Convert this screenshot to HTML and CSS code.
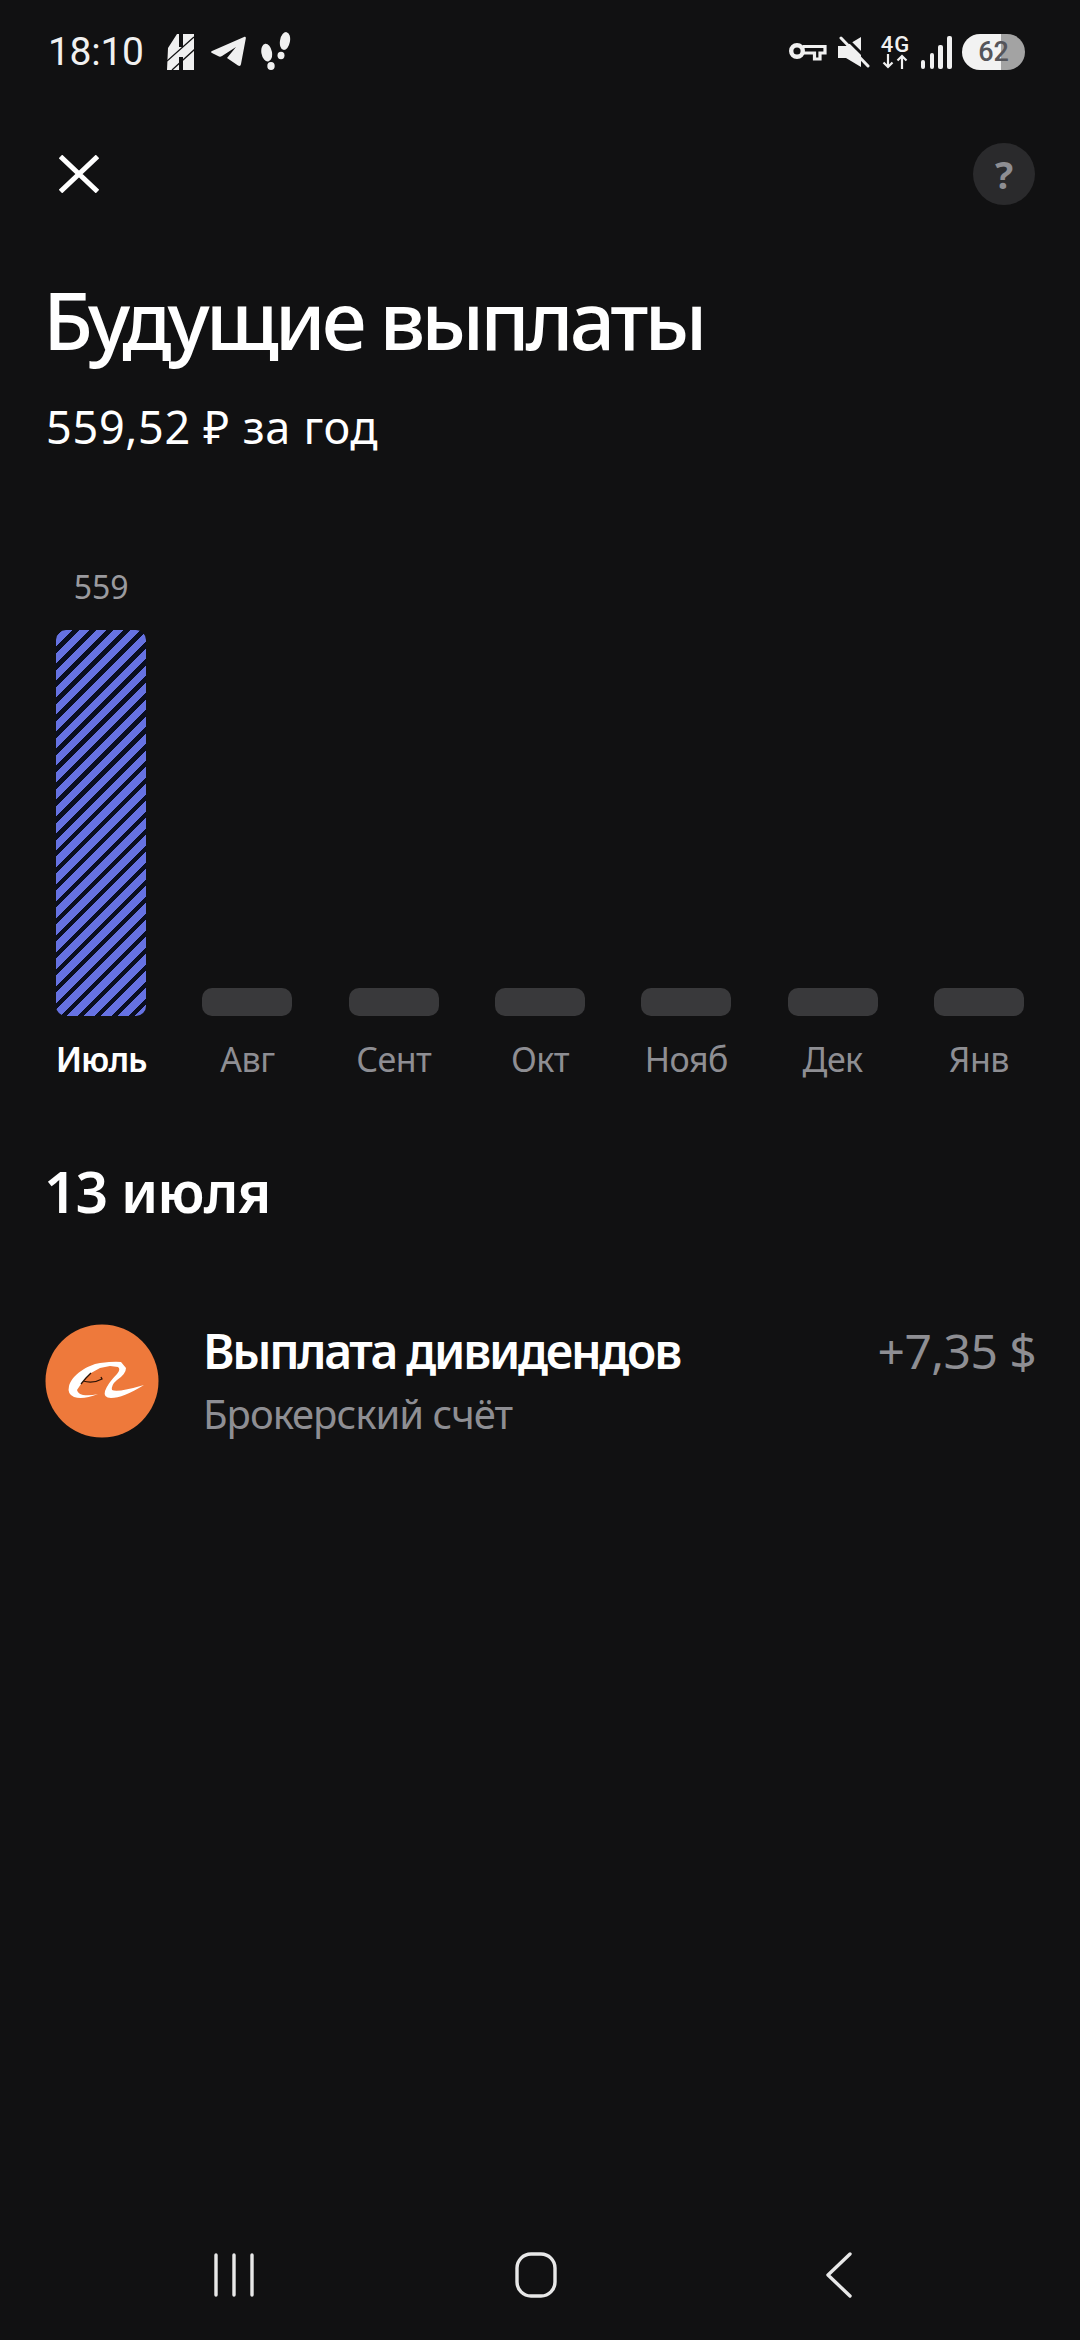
FILE: index.html
```html
<!DOCTYPE html>
<html lang="ru">
<head>
    <meta charset="UTF-8">
    <title>Будущие выплаты</title>
    <link rel="stylesheet" href="styles.css">
</head>
<body>
    <div class="status-bar">
        <div class="status-left">
            <span class="time">18:10</span>
            <svg class="ic-h" width="28" height="36" viewBox="0 0 28 36">
                <path fill="#f0f0f0" d="M1 14L10 0h2v13h4V0h11v36H16V23h-4v13H0z"/>
                <path stroke="#111112" stroke-width="1.300" d="M0 27L27 3M5 36L28 15"/>
            </svg>
            <svg class="ic-tg" width="35" height="32" viewBox="0 0 35 32">
                <path fill="#f0f0f0" d="M1 15L33 1c1.500-.5 2 0 1.800 1.500L30 28c-.3 2-1.500 2.500-3 1.500L16 22l9-11-14 9c-1.500 1-2.500 1-4 0L1 17c-1.500-.7-1-1.500 0-2z"/>
            </svg>
            <svg class="ic-steps" width="30" height="40" viewBox="0 0 30 40">
                <ellipse fill="#f0f0f0" cx="5.700" cy="20.700" rx="5.300" ry="9" transform="rotate(-10 5.700 20.700)"/>
                <ellipse fill="#f0f0f0" cx="10" cy="34" rx="3.700" ry="3.900"/>
                <ellipse fill="#f0f0f0" cx="24" cy="9" rx="5" ry="9" transform="rotate(10 24 9)"/>
                <ellipse fill="#f0f0f0" cx="20" cy="23.500" rx="3.500" ry="3.700"/>
            </svg>
        </div>
        <div class="status-right">
            <svg width="38" height="22" viewBox="0 0 38 22">
                <circle cx="8" cy="10" r="5.800" fill="none" stroke="#f0f0f0" stroke-width="4.400"/>
                <path fill="none" stroke="#f0f0f0" stroke-width="3.200" d="M14 5.500H36V12H31V18H25.500V12H14"/>
            </svg>
            <svg width="32" height="32" viewBox="0 0 32 32">
                <path fill="#f0f0f0" d="M0 10h8L23 1v30L8 22H0z"/>
                <path stroke="#111112" stroke-width="3" d="M6 0l28 28"/>
                <path stroke="#f0f0f0" stroke-width="3" stroke-linecap="round" d="M3 2l27 28"/>
            </svg>
            <div class="net">
                <span class="net-label">4G</span>
                <svg width="26" height="15" viewBox="0 0 26 15">
                    <path fill="none" stroke="#f0f0f0" stroke-width="2.200" d="M6 0v13M1.500 8.500L6 13l4.500-4.500M20 15V2M15.500 6.500L20 2l4.500 4.500"/>
                </svg>
            </div>
            <div class="signal">
                <i class="s1"></i><i class="s2"></i><i class="s3"></i><i class="s4"></i>
            </div>
            <div class="battery"><span>62</span></div>
        </div>
    </div>

    <div class="top-actions">
        <svg width="40" height="38" viewBox="0 0 40 38">
            <path stroke="#fff" stroke-width="5" d="M1.500 1.500l37 35M38.500 1.500l-37 35"/>
        </svg>
        <div class="help">?</div>
    </div>

    <h1>Будущие выплаты</h1>
    <div class="subtitle">559,52 ₽ за год</div>

    <div class="chart">
        <div class="col active">
            <div class="value">559</div>
            <div class="bar striped"></div>
            <div class="month">Июль</div>
        </div>
        <div class="col"><div class="bar"></div><div class="month">Авг</div></div>
        <div class="col"><div class="bar"></div><div class="month">Сент</div></div>
        <div class="col"><div class="bar"></div><div class="month">Окт</div></div>
        <div class="col"><div class="bar"></div><div class="month">Нояб</div></div>
        <div class="col"><div class="bar"></div><div class="month">Дек</div></div>
        <div class="col"><div class="bar"></div><div class="month">Янв</div></div>
    </div>

    <h2>13 июля</h2>

    <div class="payment">
        <svg class="logo" width="114" height="114" viewBox="0 0 114 114">
            <circle cx="57" cy="57" r="56.500" fill="#ee793b"/>
            <path fill="#fff" d="M53 70Q38 76 29 73Q22 70 24 62C27 51 42 41 55 39Q70 37 76 38L81 44Q81 50 72 56Q66 61 67 66Q72 69 99 61Q78 74 66 74Q58 74 60 67Q63 59 72 50Q76 45 73 43L65 42L55 44L46 49L41 54L36 60L32 66Q33 70 38 71Q45 72 53 70Z"/>
            <path fill="none" stroke="#2a1206" stroke-width="1.300" d="M38 57Q48 60 57 55l-1-2M46 49l-5 5-5 6"/>
        </svg>
        <div class="payment-text">
            <div class="payment-title">Выплата дивидендов</div>
            <div class="payment-sub">Брокерский счёт</div>
        </div>
        <div class="amount">+7,35 $</div>
    </div>

    <div class="nav-bar">
        <svg width="40" height="44" viewBox="0 0 40 44">
            <path stroke="#e8e8e8" stroke-width="3.400" stroke-linecap="round" d="M2 2v40M20 2v40M38 2v40"/>
        </svg>
        <svg class="home" width="42" height="46" viewBox="0 0 42 46">
            <rect x="2" y="2" width="38" height="42" rx="14" fill="none" stroke="#e8e8e8" stroke-width="3.400"/>
        </svg>
        <svg width="26" height="46" viewBox="0 0 26 46">
            <path fill="none" stroke="#e8e8e8" stroke-width="3.400" stroke-linecap="round" stroke-linejoin="round" d="M24 2L2 23l22 21"/>
        </svg>
    </div>
</body>
</html>
```

FILE: styles.css
```css
* {
    box-sizing: border-box;
}
body {
    font-family: 'Noto Sans', sans-serif;
    background: #111112;
    color: #fff;
    margin: 0;
    width: 1080px;
    height: 2340px;
    overflow: hidden;
    display: flex;
    flex-direction: column;
}
.status-bar {
    display: flex;
    justify-content: space-between;
    align-items: center;
    height: 40px;
    margin-top: 32px;
    padding: 0 55px 0 48px;
    color: #f0f0f0;
}
.status-left {
    display: flex;
    align-items: center;
    gap: 15.500px;
}
.time {
    font-family: Roboto, sans-serif;
    font-size: 39px;
    letter-spacing: -0.300px;
    margin-right: 8px;
}
.status-right {
    display: flex;
    align-items: center;
    gap: 10.500px;
}
.net {
    display: flex;
    flex-direction: column;
    align-items: center;
    width: 30px;
}
.net-label {
    font-family: Roboto, sans-serif;
    font-size: 22px;
    font-weight: 500;
    letter-spacing: 1px;
    line-height: 18px;
}
.signal {
    display: flex;
    align-items: flex-end;
    gap: 4.200px;
    height: 34px;
}
.signal i {
    display: block;
    width: 4.500px;
    background: #f0f0f0;
    border-radius: 2px;
}
.s1 { height: 9px; }
.s2 { height: 16px; }
.s3 { height: 24px; }
.s4 { height: 33px; }
.battery {
    width: 63px;
    height: 36px;
    border-radius: 18px;
    background: linear-gradient(90deg, #f2f2f2 62%, #a3a3a3 62%);
    color: #55555a;
    font-family: Roboto, sans-serif;
    font-size: 27px;
    font-weight: 500;
    display: flex;
    align-items: center;
    justify-content: center;
}
.top-actions {
    display: flex;
    justify-content: space-between;
    align-items: center;
    height: 62px;
    margin-top: 71px;
    padding: 0 45px 0 59px;
}
.help {
    width: 62px;
    height: 62px;
    border-radius: 50%;
    background: #2a2a2c;
    color: #8e8e93;
    font-size: 38px;
    font-weight: 700;
    display: flex;
    align-items: center;
    justify-content: center;
}
h1 {
    font-size: 80px;
    font-weight: 500;
    letter-spacing: -4px;
    line-height: 90px;
    margin: 69px 0 0 43px;
}
.subtitle {
    font-size: 45px;
    letter-spacing: 0.700px;
    line-height: 60px;
    margin: 33px 0 0 46px;
}
.chart {
    display: grid;
    grid-template-columns: repeat(7, 146.300px);
    align-items: end;
    height: 540px;
    margin-top: 84px;
    padding-left: 28px;
}
.col {
    display: flex;
    flex-direction: column;
    align-items: center;
}
.value {
    color: #9a9a9e;
    font-size: 32px;
    line-height: 44px;
    margin-bottom: 21px;
}
.bar {
    width: 90px;
    height: 28px;
    border-radius: 10px;
    background: #39393b;
}
.bar.striped {
    height: 386px;
    background: repeating-linear-gradient(135deg, #0a0e20 0, #0a0e20 4.500px, #6672e2 4.500px, #6672e2 12px);
}
.month {
    color: #8e8e93;
    font-size: 34px;
    letter-spacing: -0.500px;
    line-height: 44px;
    margin-top: 21px;
    white-space: nowrap;
}
.active .month {
    color: #fff;
    font-weight: 600;
    letter-spacing: -1px;
}
h2 {
    font-size: 57px;
    font-weight: 600;
    letter-spacing: -1px;
    line-height: 76px;
    margin: 72px 0 0 44px;
}
.payment {
    display: flex;
    align-items: flex-start;
    margin-top: 95px;
    padding: 0 44px 0 45px;
}
.logo {
    flex: none;
}
.payment-text {
    flex: 1;
    margin: -3px 0 0 44px;
}
.payment-title {
    font-size: 48px;
    font-weight: 600;
    letter-spacing: -2.300px;
    line-height: 60px;
}
.payment-sub {
    color: #8e8e93;
    font-size: 40px;
    letter-spacing: -1px;
    line-height: 50px;
    margin-top: 8px;
}
.amount {
    color: #8e8e93;
    font-size: 48px;
    letter-spacing: -0.600px;
    line-height: 60px;
    margin-top: -3px;
}
.nav-bar {
    margin-top: auto;
    margin-bottom: 42px;
    display: flex;
    justify-content: space-between;
    align-items: center;
    padding: 0 228px 0 214px;
}
.home {
    margin-left: -8px;
}
```
